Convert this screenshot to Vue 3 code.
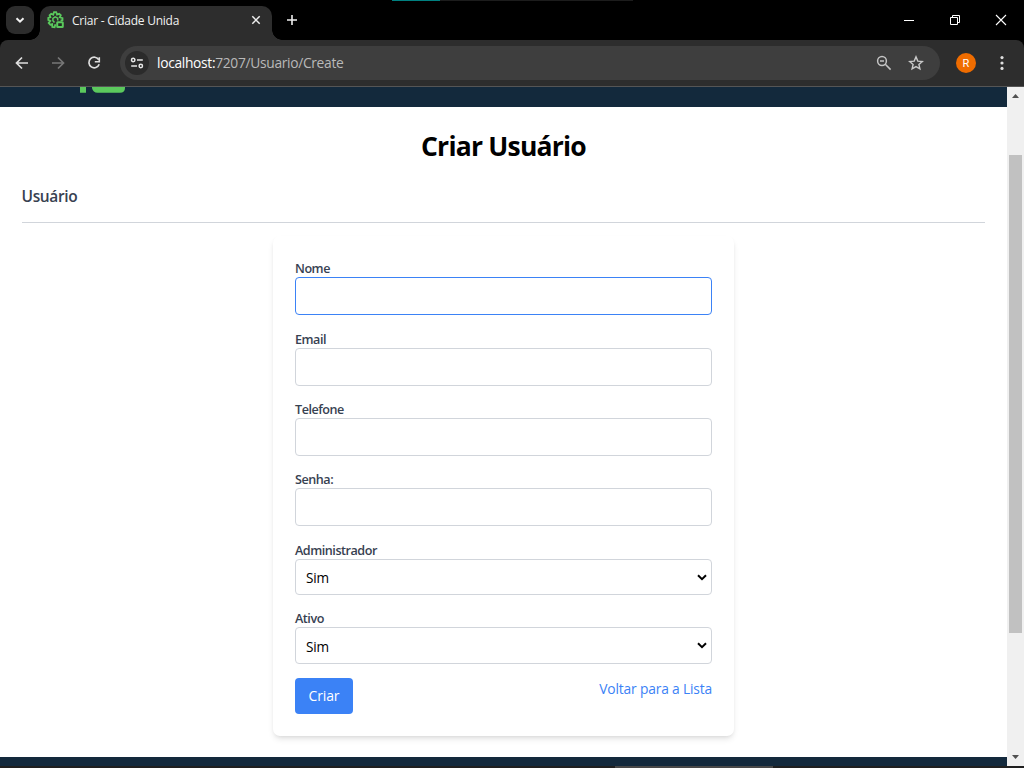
<script setup>
import { ref } from 'vue'

const fields = [
  { id: 'nome', label: 'Nome', type: 'text', active: true },
  { id: 'email', label: 'Email', type: 'email' },
  { id: 'telefone', label: 'Telefone', type: 'tel' },
  { id: 'senha', label: 'Senha:', type: 'password' }
]
const selects = ref([
  { id: 'administrador', label: 'Administrador', value: 'Sim' },
  { id: 'ativo', label: 'Ativo', value: 'Sim' }
])
</script>

<template>
  <div class="window">
    <header class="tabstrip">
      <span class="topline"><i></i></span>
      <button class="tabsearch" aria-label="Pesquisar guias">
        <svg width="28" height="28" viewBox="0 0 28 28"><path d="M10.500 12.200l3.500 3.500 3.500-3.500" fill="none" stroke="#f2f2f2" stroke-width="2" /></svg>
      </button>
      <div class="tab">
        <svg class="favicon" width="18" height="18" viewBox="0 0 18 18">
          <path d="M8.400 13.300L7.600 16.200 5.300 16 5.200 13.200 3.300 13.700 1.700 12 3.300 10 1.300 8.900V6.900L3.400 6.200 2.600 4.200 4.200 2.800 6.200 3.700 7 1.200H9.200L10 3.600 12.200 2.800 13.800 4.300 12.800 6.300 15.500 7.100V9L13.600 9.600" fill="none" stroke="#5ac85c" stroke-width="1.800" />
          <path d="M7.500 11.600L5.900 9.700V7.400L8.200 5.900l2.500 1.300v2.200" fill="none" stroke="#5ac85c" stroke-width="1.500" />
          <rect x="10.200" y="11.200" width="5.600" height="4.800" rx=".5" fill="#202a21" stroke="#5ac85c" stroke-width="2" />
        </svg>
        <span class="tabtitle">Criar - Cidade Unida</span>
        <svg class="tabclose" width="10" height="10" viewBox="0 0 10 10"><path d="M1.300 1.300l7.400 7.400M8.700 1.300L1.300 8.700" stroke="#eee" stroke-width="1.500" /></svg>
      </div>
      <svg class="newtab" width="12" height="12" viewBox="0 0 12 12"><path d="M6 1v10M1 6h10" stroke="#eee" stroke-width="1.600" /></svg>
      <div class="controls">
        <svg width="46" height="40" viewBox="0 0 46 40"><path d="M18 20.500h10" stroke="#fff" /></svg>
        <svg width="46" height="40" viewBox="0 0 46 40"><path d="M18.500 17.500h7v7h-7zM20.500 17.500v-2h7v7h-2" fill="none" stroke="#fff" /></svg>
        <svg width="46" height="40" viewBox="0 0 46 40"><path d="M18 15l10 10M28 15L18 25" stroke="#fff" stroke-width="1.100" /></svg>
      </div>
    </header>

    <nav class="toolbar">
      <svg width="36" height="36" viewBox="0 0 36 36"><path d="M24 18H13M18 12.500L12.500 18l5.500 5.500" fill="none" stroke="#dedede" stroke-width="1.700" /></svg>
      <svg width="36" height="36" viewBox="0 0 36 36"><path d="M12 18h11M18 12.500L23.500 18 18 23.500" fill="none" stroke="#777" stroke-width="1.700" /></svg>
      <svg width="36" height="36" viewBox="0 0 36 36"><path d="M22.800 14.800A5.300 5.300 0 1 0 23.200 19.300" fill="none" stroke="#dedede" stroke-width="1.700" /><path d="M23.300 12.200v4.500h-4.500" fill="none" stroke="#dedede" stroke-width="1.600" /></svg>
      <div class="omnibox">
        <span class="siteinfo">
          <svg width="14" height="14" viewBox="0 0 14 14" fill="none" stroke="#e8e8e8" stroke-width="1.500"><circle cx="3.200" cy="4" r="1.700" /><path d="M7 4h5.800M1.200 10h5.800" /><circle cx="10.800" cy="10" r="1.700" /></svg>
        </span>
        <span class="url"><b>localhost:</b>7207/Usuario/Create</span>
        <svg class="zoomout" width="16" height="16" viewBox="0 0 16 16" fill="none" stroke="#c4c4c4" stroke-width="1.500"><circle cx="6" cy="6" r="4.400" /><path d="M4 6h4M9.300 9.300l5.300 5.300" /></svg>
        <svg class="star" width="16" height="16" viewBox="0 0 16 16"><path d="M8 1.900l1.800 4.200 4.500.4-3.400 3 1 4.400L8 11.600l-3.900 2.300 1-4.400-3.400-3 4.500-.4z" fill="none" stroke="#c9c9c9" stroke-width="1.400" /></svg>
      </div>
      <span class="avatar">R</span>
      <svg class="menu" width="16" height="20" viewBox="0 0 16 20" fill="#dedede"><circle cx="8" cy="4.600" r="1.600" /><circle cx="8" cy="10" r="1.600" /><circle cx="8" cy="15.400" r="1.600" /></svg>
    </nav>

    <div class="viewport">
      <div class="page">
        <div class="sitebar">
          <svg width="60" height="6" viewBox="0 0 60 6" fill="#5bc95d"><path d="M6 0h6v5.700H6zM18 0h33v1q0 4.700-5 4.700H23.500Q19 5.700 18 1z" /></svg>
        </div>
        <main>
          <h1>Criar Usuário</h1>
          <h4>Usuário</h4>
          <hr>
          <form class="card" @submit.prevent>
            <div v-for="f in fields" :key="f.id" class="field">
              <label :for="f.id">{{ f.label }}</label>
              <input :id="f.id" :type="f.type" :class="{ active: f.active }">
            </div>
            <div v-for="s in selects" :key="s.id" class="field">
              <label :for="s.id">{{ s.label }}</label>
              <div class="selectwrap">
                <select :id="s.id" v-model="s.value">
                  <option>Sim</option>
                  <option>Não</option>
                </select>
                <svg class="chevron" width="10" height="7" viewBox="0 0 10 7"><path d="M1 1.300l4 3.900 4-3.900" fill="none" stroke="#000" stroke-width="2" /></svg>
              </div>
            </div>
            <div class="actions">
              <button class="submit" type="submit">Criar</button>
              <a href="#">Voltar para a Lista</a>
            </div>
          </form>
        </main>
        <footer></footer>
      </div>
      <aside class="scrollbar">
        <svg width="17" height="17" viewBox="0 0 17 17"><path d="M5 11l3.500-4 3.500 4z" fill="#505050" /></svg>
        <span class="thumb"></span>
        <svg class="down" width="17" height="17" viewBox="0 0 17 17"><path d="M5 6h7l-3.500 4z" fill="#505050" /></svg>
      </aside>
    </div>
    <div class="taskbar"><span></span></div>
  </div>
</template>

<style>
body { margin: 0; overflow: hidden; background: #000; }
</style>

<style scoped>
* { box-sizing: border-box; }
svg { display: block; flex: none; }
.window { width: 1024px; height: 768px; display: flex; flex-direction: column; overflow: hidden; background: #000; font-family: "Open Sans", "Noto Sans", sans-serif; }
.tabstrip { position: relative; height: 40px; flex: none; display: flex; align-items: flex-start; padding-left: 6px; }
.topline { position: absolute; left: 392px; top: 0; width: 241px; height: 1px; background: #1c1c1c; }
.topline i { display: block; width: 48px; height: 1px; background: #008080; }
.tabsearch { width: 28px; height: 28px; margin-top: 6px; padding: 0; border: 0; border-radius: 9px; background: #2c2c2c; }
.tab { position: relative; width: 232px; height: 34px; margin: 6px 0 0 6px; background: #2d2d2d; border-radius: 10px 10px 0 0; display: flex; align-items: center; padding: 0 11px 6px 7px; }
.tab::before, .tab::after { content: ""; position: absolute; bottom: 0; width: 10px; height: 10px; }
.tab::before { left: -10px; background: radial-gradient(circle at 0 0, transparent 9.5px, #2d2d2d 10px); }
.tab::after { right: -10px; background: radial-gradient(circle at 100% 0, transparent 9.5px, #2d2d2d 10px); }
.tabtitle { flex: 1; margin-left: 7px; padding-top: 2px; color: #f1f1f1; font-size: 12px; line-height: 18px; letter-spacing: -0.25px; white-space: nowrap; }
.newtab { margin: 14px 0 0 14px; }
.controls { display: flex; margin-left: auto; }
.toolbar { height: 47px; flex: none; display: flex; align-items: center; padding-left: 4px; background: #2d2d2d; border-bottom: 1px solid #555; border-radius: 8px 8px 0 0; }
.omnibox { width: 820px; height: 34px; margin-left: 8px; border-radius: 17px; background: #3e3e3e; display: flex; align-items: center; padding: 0 16px 0 5px; }
.siteinfo { width: 24px; height: 24px; border-radius: 50%; background: #2b2b2b; display: flex; align-items: center; justify-content: center; }
.url { flex: 1; margin-left: 8px; font-size: 13.8px; line-height: 20px; color: #b9b9b9; letter-spacing: -0.32px; }
.url b { color: #fff; font-weight: 400; }
.zoomout { margin-right: 16px; }
.avatar { width: 20px; height: 20px; margin-left: 16px; border-radius: 50%; background: #ef6c00; color: #fff; text-align: center; font: 11px/21px Roboto, sans-serif; }
.menu { margin-left: 18px; }
.viewport { height: 679px; flex: none; display: flex; background: #fff; }
.page { width: 1007px; display: flex; flex-direction: column; }
.sitebar { height: 20px; padding-left: 74px; background: #13293c; }
main { height: 650px; padding: 0 22px; background: #fff; }
footer { height: 9px; background: #13293c; }
h1 { margin: 0; padding-top: 20px; height: 77px; text-align: center; color: #000; font-weight: 700; font-size: 26.5px; line-height: 38px; letter-spacing: -0.78px; white-space: nowrap; }
h4 { margin: 0 0 0 -0.5px; height: 38px; color: #374151; font-weight: 600; font-size: 15.5px; line-height: 24px; letter-spacing: -0.35px; }
hr { height: 1px; margin: 0 0 13px; border: 0; background: #d1d5db; }
.card { width: 461px; height: 500px; margin: 0 auto; padding: 22px; border-radius: 7px; background: #fff; display: grid; grid-template-rows: 71px 70px 70px 71px 68px 70px 36px; box-shadow: 0 4px 6px -1px rgba(0,0,0,.1), 0 2px 4px -2px rgba(0,0,0,.1); }
.field { display: flex; flex-direction: column; }
.field label { height: 19px; color: #374151; font-weight: 600; font-size: 12.6px; line-height: 22px; letter-spacing: -0.47px; }
input, select { width: 100%; height: 38px; border: 1px solid #d1d5db; border-radius: 4px; background: #fff; outline: 0; font-family: inherit; }
input { padding: 0 10px; font-size: 14px; }
input.active { border-color: #3b82f6; }
.selectwrap { position: relative; height: 36px; }
.field:nth-child(6) .selectwrap { height: 37px; }
select { display: block; height: 100%; appearance: none; padding: 1px 10px 0; color: #000; font-size: 13.6px; letter-spacing: -0.2px; }
.chevron { position: absolute; right: 5px; top: 15px; }
.actions { display: flex; justify-content: space-between; align-items: flex-start; }
.submit { width: 58px; height: 36px; padding: 0 0 1px; border: 0; border-radius: 4px; background: #3b82f6; color: #fff; font-family: inherit; font-size: 14px; letter-spacing: -0.15px; }
.actions a { color: #3b82f6; text-decoration: none; font-size: 13.8px; line-height: 22px; letter-spacing: -0.17px; white-space: nowrap; }
.scrollbar { width: 17px; height: 679px; background: #f0f0f0; display: flex; flex-direction: column; align-items: center; }
.thumb { width: 13px; height: 478px; margin-top: 51px; background: #c1c1c1; }
.down { margin-top: auto; }
.taskbar { height: 2px; flex: none; padding-left: 615px; background: #1f1f1f; }
.taskbar span { display: block; width: 158px; height: 2px; background: #484848; }
</style>
